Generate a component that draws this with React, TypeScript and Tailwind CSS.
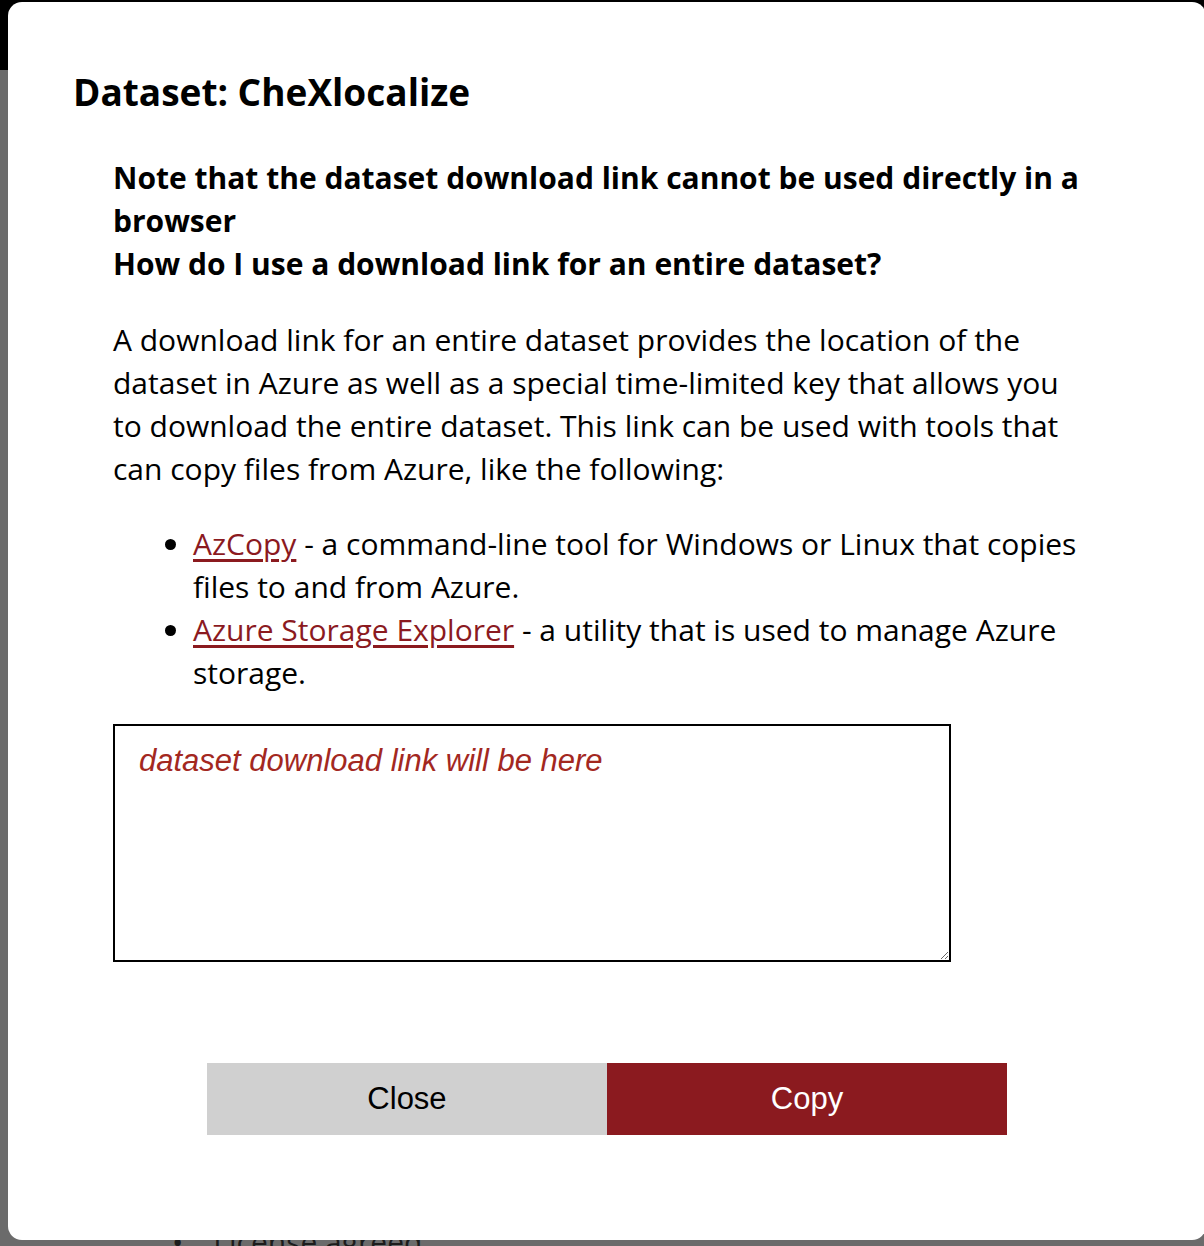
import { useState } from 'react'

const links = [
  { label: 'AzCopy', text: ' - a command-line tool for Windows or Linux that copies files to and from Azure.' },
  { label: 'Azure Storage Explorer', text: ' - a utility that is used to manage Azure storage.' },
]

export default function App() {
  const [link, setLink] = useState('')

  return (
    <div className="relative h-[1246px] w-[1204px] overflow-hidden bg-[#6b6b6b] font-['Segoe_UI','Open_Sans',sans-serif] text-black">
      {/* page behind the dialog */}
      <div className="h-[70px] bg-black" />
      <div className="pl-[172px] pt-[1150px] text-[30px] leading-[43px] text-[#1c1c1c]">
        <span className="mr-[30px]">•</span>License agreed
      </div>

      {/* Dialog */}
      <div className="absolute left-[8px] top-[2px] flex h-[1238px] w-[1198px] flex-col rounded-[14px] bg-white">
        <h2 className="ml-[65px] mt-[66px] text-[37px] font-bold leading-[48px]">Dataset: CheXlocalize</h2>

        <div className="ml-[105px] mr-[116px] flex flex-col">
          <p className="mt-[40px] text-[30px] font-bold leading-[43px]">
            Note that the dataset download link cannot be used directly in a browser
            <br />
            How do I use a download link for an entire dataset?
          </p>

          <p className="mt-[33px] text-[30px] leading-[43px]">
            A download link for an entire dataset provides the location of the dataset in Azure as well as a special
            time-limited key that allows you to download the entire dataset. This link can be used with tools that
            can copy files from Azure, like the following:
          </p>

          <ul className="mt-[32px] list-disc pl-[80px] text-[30px] leading-[43px]">
            {links.map((l) => (
              <li key={l.label}>
                <a href="#" className="text-[#8b1a1f] underline underline-offset-[4px]">
                  {l.label}
                </a>
                {l.text}
              </li>
            ))}
          </ul>

          <textarea
            value={link}
            onChange={(e) => setLink(e.target.value)}
            placeholder="dataset download link will be here"
            className="mt-[30px] h-[238px] w-[838px] border-2 border-black px-[24px] pt-[17px] pb-[14px] font-['Liberation_Sans',Arial,sans-serif] text-[31px] leading-[36px] placeholder:italic placeholder:text-[#a3281f] outline-none"
          />
        </div>

        <div className="mt-[101px] flex justify-center font-['Liberation_Sans',Arial,sans-serif] text-[31px]">
          <button className="h-[72px] w-[400px] bg-[#d0d0d0] text-black">Close</button>
          <button className="h-[72px] w-[400px] bg-[#8b1a1f] text-white">Copy</button>
        </div>
      </div>
    </div>
  )
}
